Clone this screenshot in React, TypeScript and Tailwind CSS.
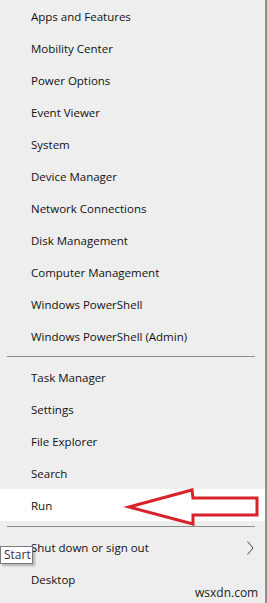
import React from 'react';

const topItems = [
  'Apps and Features',
  'Mobility Center',
  'Power Options',
  'Event Viewer',
  'System',
  'Device Manager',
  'Network Connections',
  'Disk Management',
  'Computer Management',
  'Windows PowerShell',
  'Windows PowerShell (Admin)',
];

const midItems = ['Task Manager', 'Settings', 'File Explorer', 'Search'];

function Row({ label, active, children }: { label: string; active?: boolean; children?: React.ReactNode }) {
  return (
    <div
      className={
        'flex h-8 items-center pl-[31px] pr-[12px] pt-[2px] text-[11.5px] text-[#111] ' +
        (active ? 'bg-white' : '')
      }
    >
      <span className="flex-1">{label}</span>
      {children}
    </div>
  );
}

function Separator({ tall }: { tall?: boolean }) {
  return (
    <div className={'flex items-center ' + (tall ? 'h-[10px]' : 'h-[9px]')}>
      <div className="ml-[7px] mr-[10px] h-px flex-1 bg-[#8c8c8c]" />
    </div>
  );
}

export default function App() {
  return (
    <div
      className="relative h-[603px] w-[267px] overflow-hidden border-r-2 border-[#8e8e8e] bg-[#eeeeee]"
      style={{ fontFamily: '"Segoe UI", "Open Sans", "Noto Sans", sans-serif' }}
    >
      {topItems.map((item) => (
        <Row key={item} label={item} />
      ))}
      <Separator />
      {midItems.map((item) => (
        <Row key={item} label={item} />
      ))}
      <Row label="Run" active />
      <Separator tall />
      <Row label="Shut down or sign out">
        <svg width="8" height="16" viewBox="0 0 8 16" className="mr-[-1px]">
          <path d="M1.5 1.5 L7 8 L1.5 14.5" fill="none" stroke="#444" strokeWidth="1" />
        </svg>
      </Row>
      <Row label="Desktop" />

      {/* red arrow pointing at Run */}
      <svg
        className="pointer-events-none absolute left-0 top-0"
        width="267"
        height="603"
        viewBox="0 0 267 603"
      >
        <polygon
          points="129,507 192,490 193,498 257,498 257,515 193,515 193,524"
          fill="none"
          stroke="#d7232b"
          strokeWidth="3"
          strokeLinejoin="miter"
        />
      </svg>

      {/* Start tooltip */}
      <div className="absolute left-0 top-[546px] flex h-[18px] w-[33px] items-center border border-[#7a7a7a] bg-white pl-[3px] text-[12px] text-[#333] shadow-[2px_2px_2px_rgba(0,0,0,0.25)]">
        Start
      </div>

      {/* watermark */}
      <div className="absolute left-[195px] top-[585px] text-[12px] leading-4 text-[#222]">
        wsxdn.com
      </div>
    </div>
  );
}
